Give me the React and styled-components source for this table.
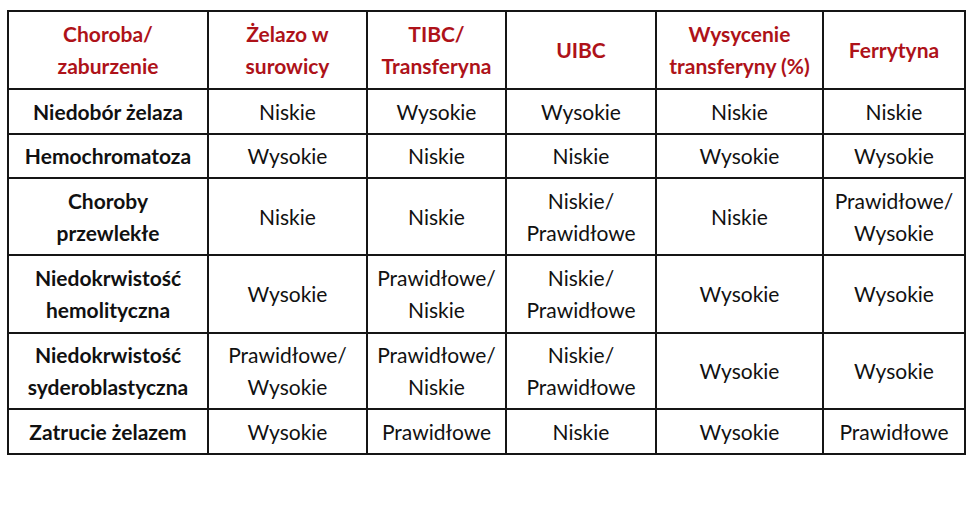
import React from 'react';
import styled, { createGlobalStyle } from 'styled-components';

const GlobalStyle = createGlobalStyle`
  body {
    margin: 0;
    background: #ffffff;
  }
`;

const Page = styled.div`
  padding: 10px 0 0 7px;
  font-family: Lato, 'Open Sans', sans-serif;
`;

const Table = styled.table`
  border-collapse: collapse;
  table-layout: fixed;
  width: 957px;
  border: 2px solid #151515;
`;

const Cell = styled.td`
  border: 2px solid #151515;
  text-align: center;
  vertical-align: middle;
  padding: 0 3px;
  font-size: 21px;
  line-height: 32px;
  color: #111111;
  height: ${(p) => p.$h}px;
  font-weight: ${(p) => (p.$bold ? 700 : 400)};
`;

const HeadCell = styled.th`
  border: 2px solid #151515;
  text-align: center;
  vertical-align: middle;
  padding: 0 3px;
  font-size: 21px;
  line-height: 32px;
  font-weight: 700;
  color: #ae1219;
  height: 76px;
`;

const widths = [200, 159, 139, 150, 167, 142];

const headers = [
  ['Choroba/', 'zaburzenie'],
  ['Żelazo w', 'surowicy'],
  ['TIBC/', 'Transferyna'],
  ['UIBC'],
  ['Wysycenie', 'transferyny (%)'],
  ['Ferrytyna'],
];

const rows = [
  { h: 43, cells: [['Niedobór żelaza'], ['Niskie'], ['Wysokie'], ['Wysokie'], ['Niskie'], ['Niskie']] },
  { h: 42, cells: [['Hemochromatoza'], ['Wysokie'], ['Niskie'], ['Niskie'], ['Wysokie'], ['Wysokie']] },
  {
    h: 75,
    cells: [
      ['Choroby', 'przewlekłe'],
      ['Niskie'],
      ['Niskie'],
      ['Niskie/', 'Prawidłowe'],
      ['Niskie'],
      ['Prawidłowe/', 'Wysokie'],
    ],
  },
  {
    h: 76,
    cells: [
      ['Niedokrwistość', 'hemolityczna'],
      ['Wysokie'],
      ['Prawidłowe/', 'Niskie'],
      ['Niskie/', 'Prawidłowe'],
      ['Wysokie'],
      ['Wysokie'],
    ],
  },
  {
    h: 74,
    cells: [
      ['Niedokrwistość', 'syderoblastyczna'],
      ['Prawidłowe/', 'Wysokie'],
      ['Prawidłowe/', 'Niskie'],
      ['Niskie/', 'Prawidłowe'],
      ['Wysokie'],
      ['Wysokie'],
    ],
  },
  { h: 43, cells: [['Zatrucie żelazem'], ['Wysokie'], ['Prawidłowe'], ['Niskie'], ['Wysokie'], ['Prawidłowe']] },
];

const Lines = ({ lines }) =>
  lines.map((line, i) => (
    <React.Fragment key={i}>
      {i > 0 && <br />}
      {line}
    </React.Fragment>
  ));

export default function App() {
  return (
    <Page>
      <GlobalStyle />
      <Table>
        <colgroup>
          {widths.map((w, i) => (
            <col key={i} style={{ width: w }} />
          ))}
        </colgroup>
        <thead>
          <tr>
            {headers.map((h, i) => (
              <HeadCell key={i}>
                <Lines lines={h} />
              </HeadCell>
            ))}
          </tr>
        </thead>
        <tbody>
          {rows.map((row, r) => (
            <tr key={r}>
              {row.cells.map((c, i) => (
                <Cell key={i} $h={row.h} $bold={i === 0}>
                  <Lines lines={c} />
                </Cell>
              ))}
            </tr>
          ))}
        </tbody>
      </Table>
    </Page>
  );
}
